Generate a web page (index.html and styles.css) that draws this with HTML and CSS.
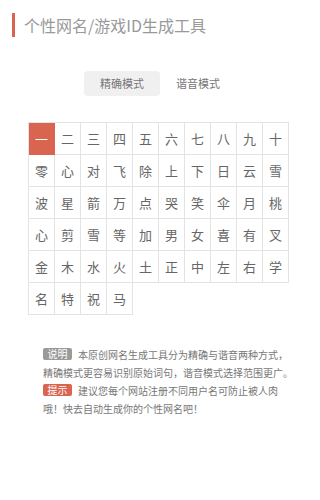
FILE: index.html
```html
<!DOCTYPE html>
<html lang="zh-CN">
<head>
<meta charset="utf-8">
<title>个性网名/游戏ID生成工具</title>
<link rel="stylesheet" href="styles.css">
</head>
<body>
<h1 class="title">个性网名/游戏ID生成工具</h1>
<div class="tabs">
  <span class="tab active">精确模式</span>
  <span class="tab">谐音模式</span>
</div>
<div class="grid">
  <span class="cell selected">一</span><span class="cell">二</span><span class="cell">三</span><span class="cell">四</span><span class="cell">五</span><span class="cell">六</span><span class="cell">七</span><span class="cell">八</span><span class="cell">九</span><span class="cell">十</span>
  <span class="cell">零</span><span class="cell">心</span><span class="cell">对</span><span class="cell">飞</span><span class="cell">除</span><span class="cell">上</span><span class="cell">下</span><span class="cell">日</span><span class="cell">云</span><span class="cell">雪</span>
  <span class="cell">波</span><span class="cell">星</span><span class="cell">箭</span><span class="cell">万</span><span class="cell">点</span><span class="cell">哭</span><span class="cell">笑</span><span class="cell">伞</span><span class="cell">月</span><span class="cell">桃</span>
  <span class="cell">心</span><span class="cell">剪</span><span class="cell">雪</span><span class="cell">等</span><span class="cell">加</span><span class="cell">男</span><span class="cell">女</span><span class="cell">喜</span><span class="cell">有</span><span class="cell">叉</span>
  <span class="cell">金</span><span class="cell">木</span><span class="cell">水</span><span class="cell">火</span><span class="cell">土</span><span class="cell">正</span><span class="cell">中</span><span class="cell">左</span><span class="cell">右</span><span class="cell">学</span>
  <span class="cell">名</span><span class="cell">特</span><span class="cell">祝</span><span class="cell">马</span>
</div>
<div class="notes">
  <p class="note"><span class="label gray">说明</span>本原创网名生成工具分为精确与谐音两种方式，<br>精确模式更容易识别原始词句，谐音模式选择范围更广。</p>
  <p class="note"><span class="label red">提示</span>建议您每个网站注册不同用户名可防止被人肉<br>哦！快去自动生成你的个性网名吧！</p>
</div>
</body>
</html>
```

FILE: styles.css
```css
html, body {
  margin: 0;
  padding: 0;
  background: #fff;
}
body {
  font-family: "Noto Sans CJK SC", "Noto Sans", sans-serif;
  color: #555;
}
.title {
  margin: 13px 0 0 12px;
  padding-left: 9px;
  border-left: 3px solid #d9644f;
  height: 24px;
  line-height: 24px;
  font-size: 16px;
  font-weight: normal;
  color: #999;
}
.tabs {
  display: flex;
  justify-content: center;
  margin-top: 34px;
}
.tab {
  width: 76px;
  height: 25px;
  line-height: 25px;
  text-align: center;
  font-size: 11px;
  color: #777;
  border-radius: 4px;
}
.tab.active {
  background: #f1f0f0;
}
.grid {
  display: grid;
  grid-template-columns: repeat(10, 26px);
  grid-auto-rows: 32px;
  margin: 26px 0 0 28px;
  width: 260px;
  border-top: 1px solid #e3e3e3;
  border-left: 1px solid #e3e3e3;
}
.cell {
  border-right: 1px solid #e3e3e3;
  border-bottom: 1px solid #e3e3e3;
  font-size: 13px;
  line-height: 31px;
  text-align: center;
  color: #666;
}
.cell.selected {
  background: #d9644f;
  color: #fff;
  border-color: #d9644f;
}
.notes {
  margin: 31px 0 0 43px;
  width: 252px;
}
.note {
  margin: 0;
  font-size: 10px;
  line-height: 18px;
  color: #777;
  white-space: nowrap;
}
.label {
  display: inline-block;
  padding: 0 4.5px;
  margin-right: 6px;
  height: 12px;
  line-height: 12px;
  color: #fff;
  border-radius: 2px;
  vertical-align: 1px;
}
.label.gray {
  background: #9a9a9a;
}
.label.red {
  background: #d9644f;
}
```
